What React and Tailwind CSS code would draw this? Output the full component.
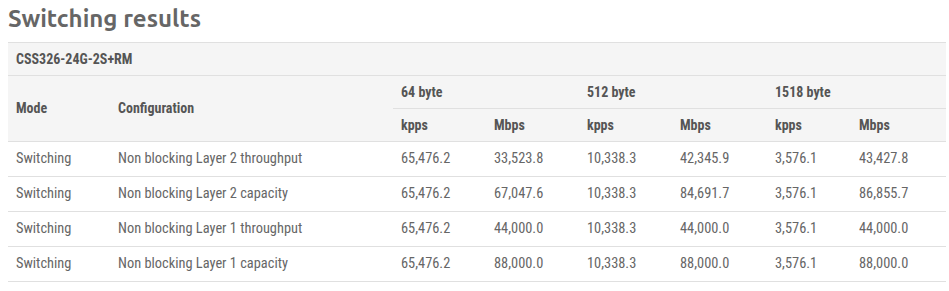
const rows = [
  ["Switching", "Non blocking Layer 2 throughput", "65,476.2", "33,523.8", "10,338.3", "42,345.9", "3,576.1", "43,427.8"],
  ["Switching", "Non blocking Layer 2 capacity", "65,476.2", "67,047.6", "10,338.3", "84,691.7", "3,576.1", "86,855.7"],
  ["Switching", "Non blocking Layer 1 throughput", "65,476.2", "44,000.0", "10,338.3", "44,000.0", "3,576.1", "44,000.0"],
  ["Switching", "Non blocking Layer 1 capacity", "65,476.2", "88,000.0", "10,338.3", "88,000.0", "3,576.1", "88,000.0"],
];

const widths = ["w-[102px]", "w-[283px]", "w-[93px]", "w-[93px]", "w-[93px]", "w-[95px]", "w-[84px]", "w-[95px]"];

export default function App() {
  return (
    <div className="bg-white px-2 pt-1 text-[#555] font-['Roboto_Condensed','Liberation_Sans_Narrow',Roboto,sans-serif]">
      <h1 className="text-[24px] leading-[30px] font-bold text-[#666] font-['Ubuntu','Open_Sans',sans-serif] mb-2">
        Switching results
      </h1>
      <table className="w-[938px] border-collapse text-[14px] table-fixed">
        <colgroup>
          {widths.map((w, i) => (
            <col key={i} className={w} />
          ))}
        </colgroup>
        <thead className="bg-[#f5f5f5] font-bold">
          <tr className="border-y border-[#e0e0e0]">
            <th colSpan={8} className="text-left px-2 h-[33px] font-bold">
              CSS326-24G-2S+RM
            </th>
          </tr>
          <tr>
            <th rowSpan={2} className="text-left px-2 border-b border-[#e0e0e0]">Mode</th>
            <th rowSpan={2} className="text-left px-2 border-b border-[#e0e0e0]">Configuration</th>
            <th colSpan={2} className="text-left px-2 h-[33px] border-b border-[#e0e0e0]">64 byte</th>
            <th colSpan={2} className="text-left px-2 border-b border-[#e0e0e0]">512 byte</th>
            <th colSpan={2} className="text-left px-2 border-b border-[#e0e0e0]">1518 byte</th>
          </tr>
          <tr className="border-b border-[#e0e0e0]">
            <th className="text-left px-2 h-[33px]">kpps</th>
            <th className="text-left px-2">Mbps</th>
            <th className="text-left px-2">kpps</th>
            <th className="text-left px-2">Mbps</th>
            <th className="text-left px-2">kpps</th>
            <th className="text-left px-2">Mbps</th>
          </tr>
        </thead>
        <tbody className="text-[14.4px] text-[#666]">
          {rows.map((r, i) => (
            <tr key={i} className="border-b border-[#e0e0e0]">
              {r.map((c, j) => (
                <td key={j} className="px-2 h-[35px] text-left">
                  {c}
                </td>
              ))}
            </tr>
          ))}
        </tbody>
      </table>
    </div>
  );
}
